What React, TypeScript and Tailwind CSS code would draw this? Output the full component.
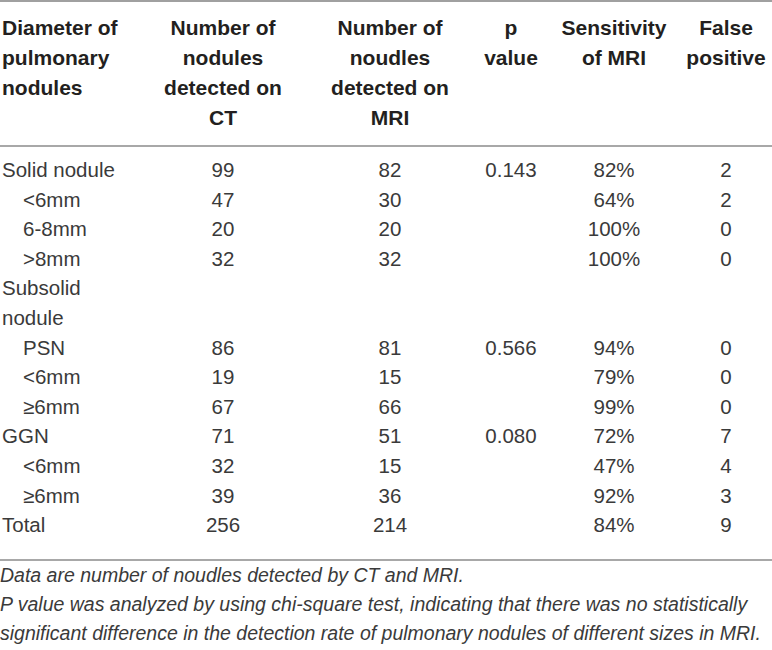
import React from "react";

const cols = "grid grid-cols-[140px_166px_168px_74px_132px_92px]";

type Row = { label: string; indent?: boolean; v: string[] };

const rows: Row[] = [
  { label: "Solid nodule", v: ["99", "82", "0.143", "82%", "2"] },
  { label: "<6mm", indent: true, v: ["47", "30", "", "64%", "2"] },
  { label: "6-8mm", indent: true, v: ["20", "20", "", "100%", "0"] },
  { label: ">8mm", indent: true, v: ["32", "32", "", "100%", "0"] },
  { label: "Subsolid", v: ["", "", "", "", ""] },
  { label: "nodule", v: ["", "", "", "", ""] },
  { label: "PSN", indent: true, v: ["86", "81", "0.566", "94%", "0"] },
  { label: "<6mm", indent: true, v: ["19", "15", "", "79%", "0"] },
  { label: "≥6mm", indent: true, v: ["67", "66", "", "99%", "0"] },
  { label: "GGN", v: ["71", "51", "0.080", "72%", "7"] },
  { label: "<6mm", indent: true, v: ["32", "15", "", "47%", "4"] },
  { label: "≥6mm", indent: true, v: ["39", "36", "", "92%", "3"] },
  { label: "Total", v: ["256", "214", "", "84%", "9"] },
];

const headers: string[][] = [
  ["Diameter of", "pulmonary", "nodules"],
  ["Number of", "nodules", "detected on", "CT"],
  ["Number of", "noudles", "detected on", "MRI"],
  ["p", "value"],
  ["Sensitivity", "of MRI"],
  ["False", "positive"],
];

export default function App() {
  return (
    <div
      className="w-[772px] h-[650px] bg-white overflow-hidden"
      style={{ fontFamily: '"Liberation Sans", Arial, sans-serif' }}
    >
      <div className="border-t-2 border-[#a0a0a0]" />
      <div className={`${cols} pt-[11px] pb-[12px] border-b-2 border-[#a8a8a8] text-[21px] leading-[30px] font-bold text-[#231f20]`}>
        {headers.map((h, i) => (
          <div key={i} className={i === 0 ? "text-left pl-[2px]" : "text-center whitespace-nowrap"}>
            {h.map((l, j) => (
              <div key={j}>{l}</div>
            ))}
          </div>
        ))}
      </div>
      <div className="pt-[8px] pb-[19px] border-b-2 border-[#a8a8a8] text-[20.5px] leading-[29.6px] text-[#3a3a3a]">
        {rows.map((r, i) => (
          <div key={i} className={cols}>
            <div className={r.indent ? "pl-[23px] whitespace-nowrap" : "pl-[2px] whitespace-nowrap"}>{r.label}</div>
            {r.v.map((c, j) => (
              <div key={j} className="text-center">{c}</div>
            ))}
          </div>
        ))}
      </div>
      <div className="pt-0 text-[19.5px] leading-[29px] italic text-[#3a3a3a]">
        <div>Data are number of noudles detected by CT and MRI.</div>
        <div className="whitespace-nowrap">P value was analyzed by using chi-square test, indicating that there was no statistically</div>
        <div className="whitespace-nowrap">significant difference in the detection rate of pulmonary nodules of different sizes in MRI.</div>
      </div>
    </div>
  );
}
